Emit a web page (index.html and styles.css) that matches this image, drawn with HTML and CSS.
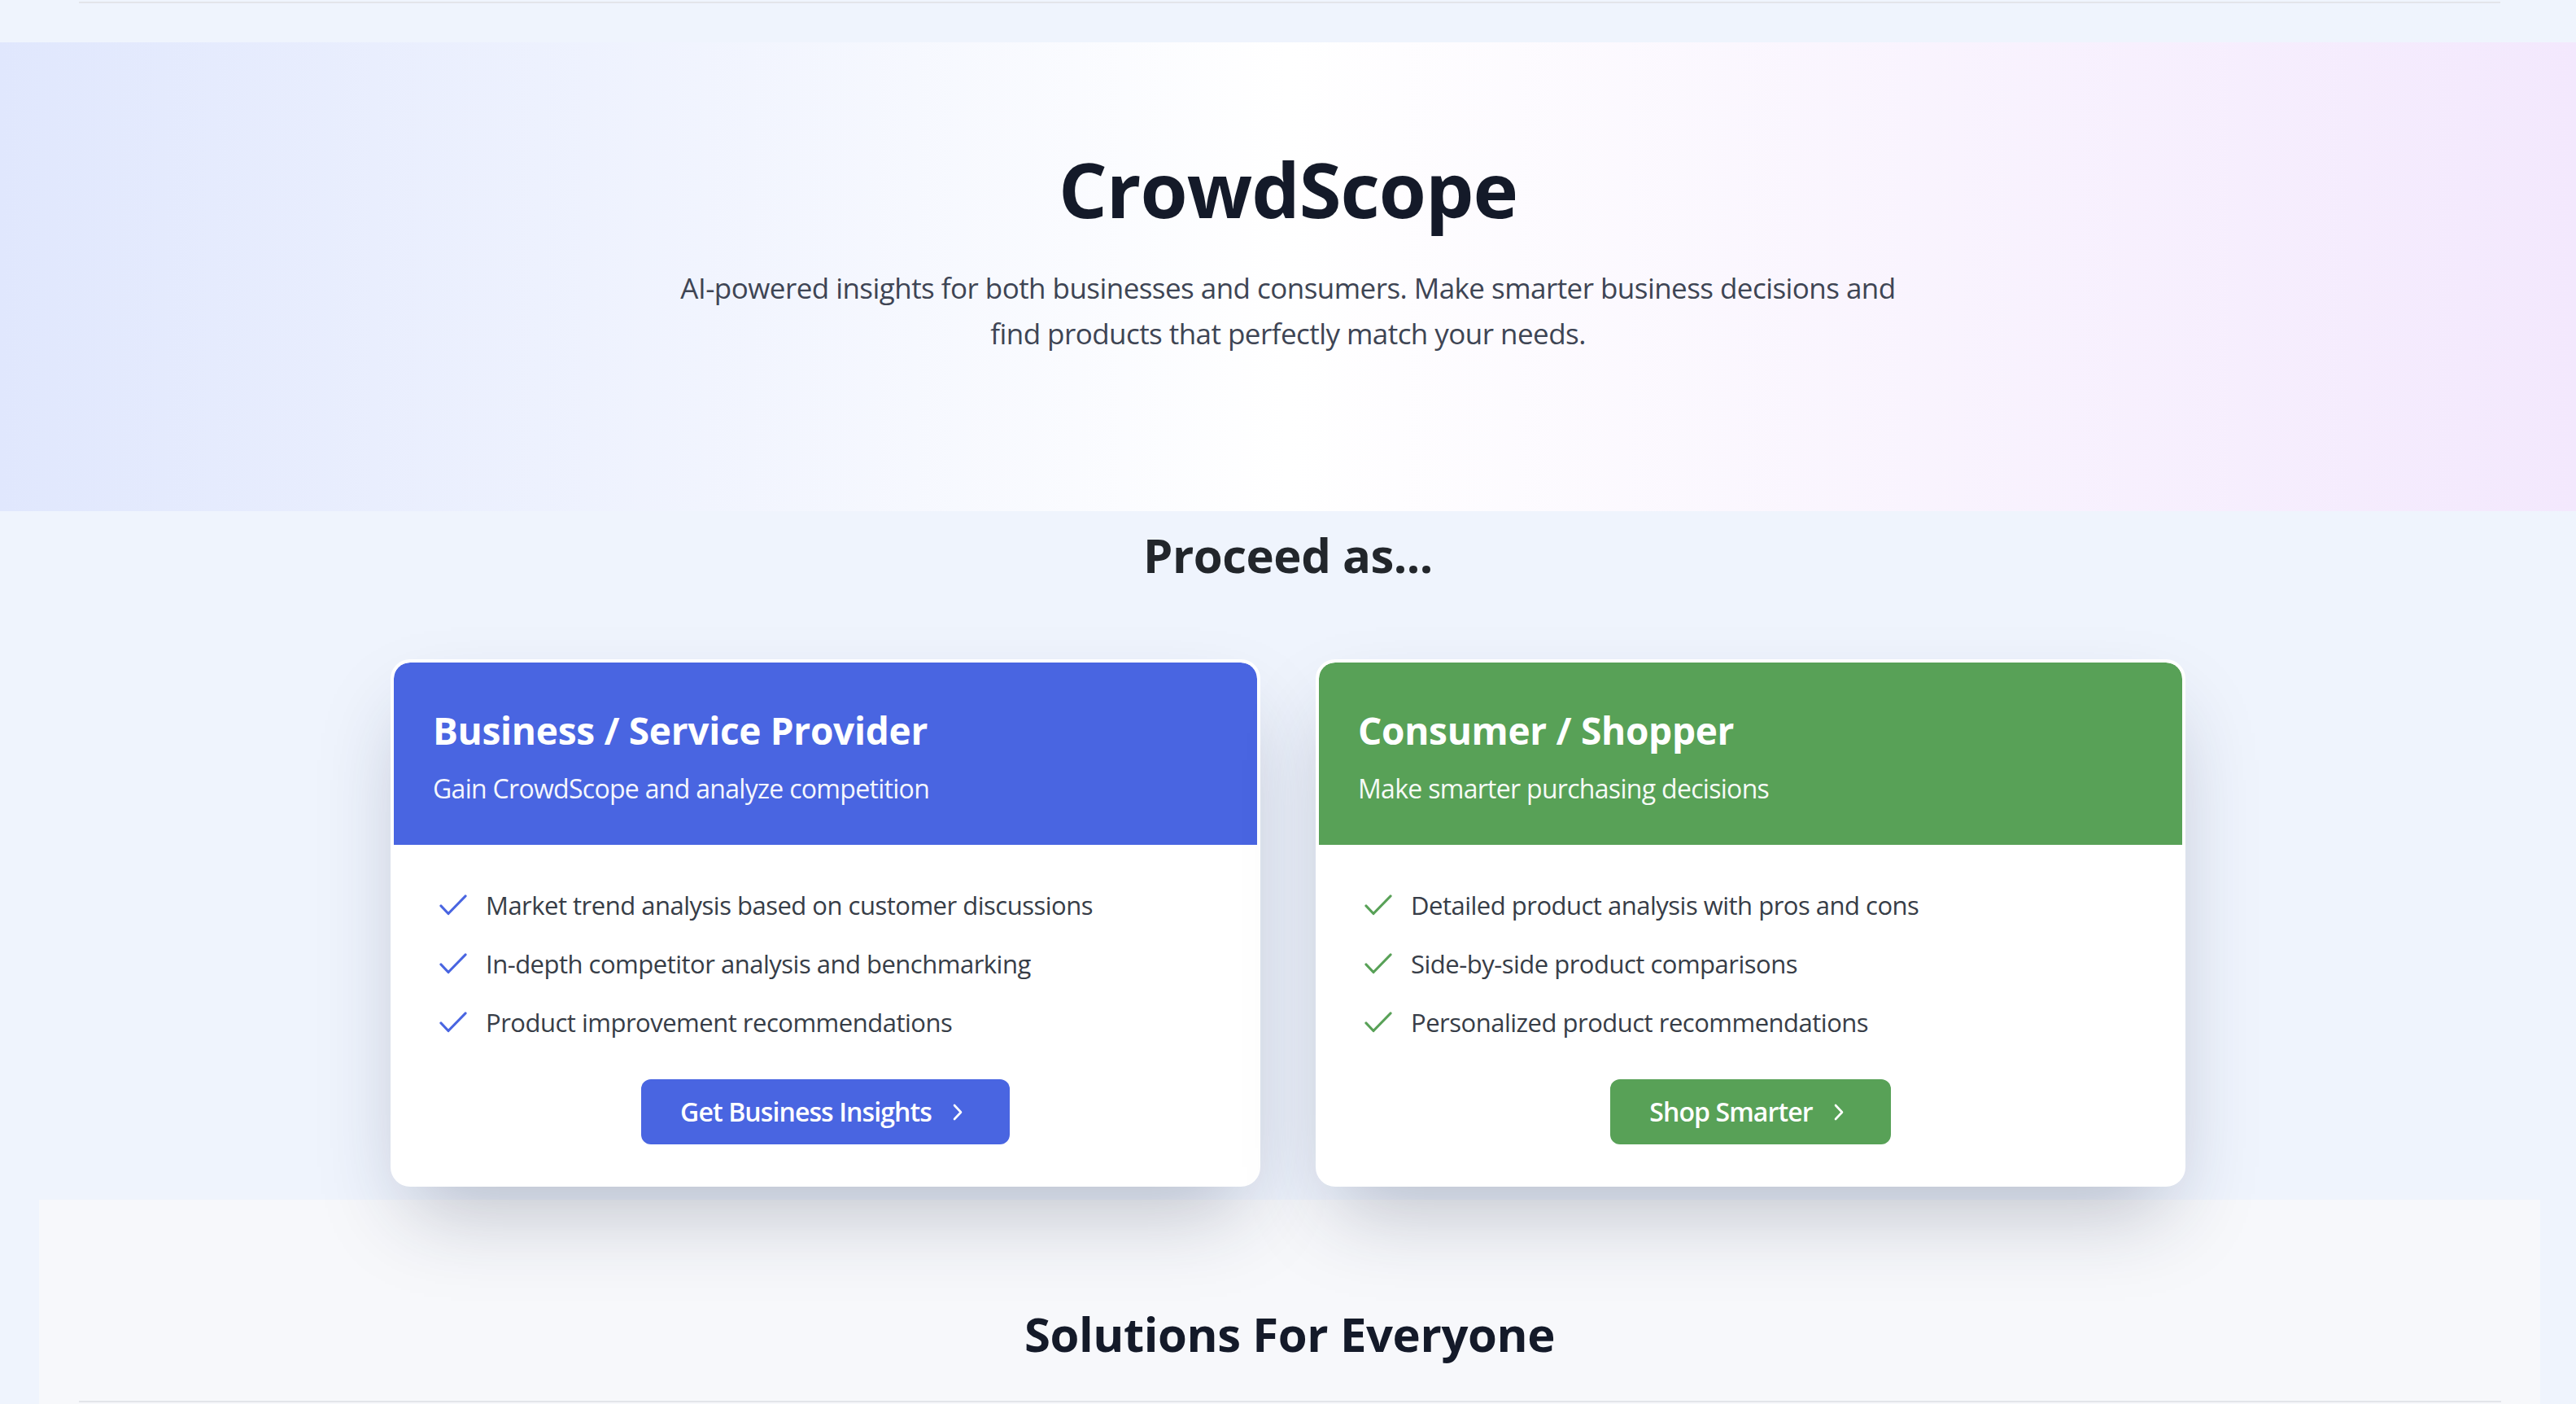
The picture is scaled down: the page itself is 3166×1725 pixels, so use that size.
FILE: index.html
```html
<!DOCTYPE html>
<html lang="en">
<head>
<meta charset="utf-8">
<title>CrowdScope</title>
<link rel="stylesheet" href="styles.css">
</head>
<body>
<div class="topline"></div>

<section class="hero">
  <h1 class="hero-title">CrowdScope</h1>
  <p class="hero-sub">AI-powered insights for both businesses and consumers. Make smarter business decisions and find products that perfectly match your needs.</p>
</section>

<section class="proceed">
  <h2 class="proceed-title">Proceed as...</h2>
  <div class="cards">
    <div class="card card-blue">
      <div class="card-head">
        <h3 class="card-title">Business / Service Provider</h3>
        <p class="card-sub">Gain CrowdScope and analyze competition</p>
      </div>
      <div class="card-body">
        <ul class="features">
          <li><svg class="check" viewBox="0 0 34 26"><polyline points="2,14 11,23.5 32,2"/></svg>Market trend analysis based on customer discussions</li>
          <li><svg class="check" viewBox="0 0 34 26"><polyline points="2,14 11,23.5 32,2"/></svg>In-depth competitor analysis and benchmarking</li>
          <li><svg class="check" viewBox="0 0 34 26"><polyline points="2,14 11,23.5 32,2"/></svg>Product improvement recommendations</li>
        </ul>
        <div class="btn-row">
          <a class="btn" href="#">Get Business Insights<svg class="chev" viewBox="0 0 32 32"><polyline points="12,8 20,16.5 12,25"/></svg></a>
        </div>
      </div>
    </div>
    <div class="card card-green">
      <div class="card-head">
        <h3 class="card-title">Consumer / Shopper</h3>
        <p class="card-sub">Make smarter purchasing decisions</p>
      </div>
      <div class="card-body">
        <ul class="features">
          <li><svg class="check" viewBox="0 0 34 26"><polyline points="2,14 11,23.5 32,2"/></svg>Detailed product analysis with pros and cons</li>
          <li><svg class="check" viewBox="0 0 34 26"><polyline points="2,14 11,23.5 32,2"/></svg>Side-by-side product comparisons</li>
          <li><svg class="check" viewBox="0 0 34 26"><polyline points="2,14 11,23.5 32,2"/></svg>Personalized product recommendations</li>
        </ul>
        <div class="btn-row">
          <a class="btn" href="#">Shop Smarter<svg class="chev" viewBox="0 0 32 32"><polyline points="12,8 20,16.5 12,25"/></svg></a>
        </div>
      </div>
    </div>
  </div>
</section>

<section class="solutions">
  <h2 class="solutions-title">Solutions For Everyone</h2>
  <div class="solutions-line"></div>
</section>
</body>
</html>
```

FILE: styles.css
```css
* { box-sizing: border-box; }

html, body {
  margin: 0;
  padding: 0;
}

body {
  background: #eff4fd;
  font-family: "Open Sans", "Noto Sans", sans-serif;
  color: #212529;
  overflow: hidden;
}

.topline {
  height: 2px;
  margin: 2px 93px 0 97px;
  background: #e3e5ea;
}

.hero {
  margin-top: 48px;
  height: 576px;
  padding-top: 132px;
  background: linear-gradient(to right, #e0e7fd 0%, #ffffff 50%, #f3e8fd 100%);
  text-align: center;
}

.hero-title {
  margin: 0 0 46px;
  font-size: 94px;
  line-height: 96px;
  font-weight: 700;
  color: #141a29;
  letter-spacing: -1px;
}

.hero-sub {
  margin: 0 auto;
  max-width: 1540px;
  font-size: 35px;
  line-height: 56px;
  color: #3e4554;
  letter-spacing: -0.55px;
}

.proceed {
  padding-top: 18px;
}

.proceed-title {
  margin: 0;
  text-align: center;
  font-size: 58px;
  line-height: 72px;
  font-weight: 700;
  color: #22262b;
  letter-spacing: -0.5px;
}

.cards {
  width: 2206px;
  margin: 92px auto 0;
  display: grid;
  grid-template-columns: 1fr 1fr;
  column-gap: 68px;
}

.card {
  position: relative;
  z-index: 1;
  background: #ffffff;
  border: 4px solid #ffffff;
  border-radius: 24px;
  overflow: hidden;
  box-shadow: 0 50px 100px -24px rgba(30, 40, 70, 0.28);
}

.card-head {
  padding: 51px 48px 45px;
  color: #ffffff;
  border-radius: 20px 20px 0 0;
}

.card-blue .card-head, .card-blue .btn { background: #4965e1; }
.card-green .card-head, .card-green .btn { background: #58a157; }
.card-blue .check { stroke: #4965e1; }
.card-green .check { stroke: #58a157; }

.card-title {
  margin: 0 0 16px;
  font-size: 46px;
  line-height: 64px;
  font-weight: 700;
  letter-spacing: -0.3px;
}

.card-sub {
  margin: 0;
  font-size: 32px;
  line-height: 48px;
  opacity: 0.95;
  letter-spacing: -0.7px;
}

.card-body {
  padding: 50px 48px 48px;
}

.features {
  list-style: none;
  margin: 0 0 46px;
  padding: 0 0 0 8px;
}

.features li {
  display: flex;
  align-items: center;
  font-size: 31px;
  line-height: 48px;
  color: #373d47;
  margin-bottom: 24px;
  letter-spacing: -0.5px;
}

.features li:last-child { margin-bottom: 0; }

.check {
  width: 34px;
  height: 26px;
  flex: none;
  margin-right: 23px;
  fill: none;
  stroke-width: 3.2;
  stroke-linecap: round;
  stroke-linejoin: round;
}

.btn-row {
  display: flex;
  justify-content: center;
}

.btn {
  display: inline-flex;
  align-items: center;
  height: 80px;
  padding: 16px 48px;
  border-radius: 12px;
  color: #ffffff;
  text-decoration: none;
  font-size: 32px;
  line-height: 48px;
  font-weight: 600;
  letter-spacing: -0.9px;
}

.chev {
  width: 32px;
  height: 32px;
  margin-left: 16px;
  fill: none;
  stroke: #ffffff;
  stroke-width: 2.6;
  stroke-linecap: round;
  stroke-linejoin: round;
}

.solutions {
  margin: 16px 44px 0 48px;
  background: #f7f8fb;
  padding-top: 129px;
  height: 400px;
}

.solutions-title {
  margin: 0 0 46px;
  text-align: center;
  font-size: 58px;
  line-height: 72px;
  font-weight: 700;
  color: #141a29;
  letter-spacing: -0.4px;
}

.solutions-line {
  height: 2px;
  margin: 0 48px 0 49px;
  background: #e3e5ea;
}
```
